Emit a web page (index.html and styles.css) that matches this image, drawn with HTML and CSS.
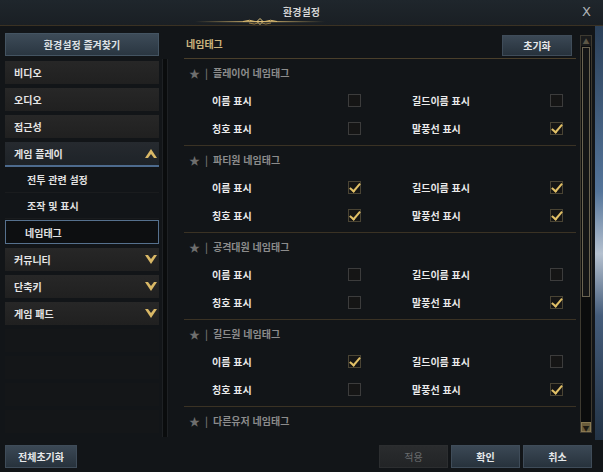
FILE: index.html
```html
<!DOCTYPE html>
<html lang="ko">
<head>
<meta charset="utf-8">
<title>환경설정</title>
<link rel="stylesheet" href="styles.css">
</head>
<body>
<div class="window">
  <header class="titlebar">
    <div class="title">환경설정</div>
    <div class="ornament">
      <svg width="130" height="8" viewBox="0 0 130 8">
        <defs>
          <linearGradient id="gl" x1="0" x2="1" y1="0" y2="0">
            <stop offset="0" stop-color="#c9a75a" stop-opacity="0"/>
            <stop offset="0.5" stop-color="#e2c27a"/>
            <stop offset="1" stop-color="#c9a75a" stop-opacity="0"/>
          </linearGradient>
        </defs>
        <rect x="0" y="3" width="130" height="1.2" fill="url(#gl)"/>
        <path d="M48 3.5 Q55 1 60 3.5 M82 3.5 Q75 1 70 3.5" stroke="#d9b86c" stroke-width="1" fill="none"/>
        <path d="M65 0.5 L68 3.5 L65 6.5 L62 3.5 Z" fill="none" stroke="#e6c980" stroke-width="1"/>
        <path d="M54 5 Q60 7 63 5 M76 5 Q70 7 67 5" stroke="#b99650" stroke-width="0.8" fill="none"/>
      </svg>
    </div>
    <div class="close">X</div>
  </header>

  <div class="content">
    <aside class="sidebar">
      <div class="menu">
        <div class="fav-btn">환경설정 즐겨찾기</div>
        <div class="item">비디오</div>
        <div class="item">오디오</div>
        <div class="item">접근성</div>
        <div class="item open">게임 플레이<span class="chev up"></span></div>
        <div class="sub">전투 관련 설정</div>
        <div class="sub">조작 및 표시</div>
        <div class="sub active">네임태그</div>
        <div class="item">커뮤니티<span class="chev"></span></div>
        <div class="item">단축키<span class="chev"></span></div>
        <div class="item">게임 패드<span class="chev"></span></div>
        <div class="item empty"></div>
        <div class="item empty"></div>
        <div class="item empty"></div>
        <div class="item empty"></div>
      </div>
      <div class="side-scroll"></div>
    </aside>

    <main class="panel">
      <div class="panel-head">
        <div class="panel-title">네임태그</div>
        <div class="btn reset">초기화</div>
      </div>
      <div class="sections">
        <section class="group">
          <div class="group-title"><span class="star">★</span><span class="bar">|</span>플레이어 네임태그</div>
          <div class="row"><span class="lbl">이름 표시</span><span class="cb"></span><span class="lbl">길드이름 표시</span><span class="cb"></span></div>
          <div class="row"><span class="lbl">칭호 표시</span><span class="cb"></span><span class="lbl">말풍선 표시</span><span class="cb on"></span></div>
        </section>
        <section class="group">
          <div class="group-title"><span class="star">★</span><span class="bar">|</span>파티원 네임태그</div>
          <div class="row"><span class="lbl">이름 표시</span><span class="cb on"></span><span class="lbl">길드이름 표시</span><span class="cb on"></span></div>
          <div class="row"><span class="lbl">칭호 표시</span><span class="cb on"></span><span class="lbl">말풍선 표시</span><span class="cb on"></span></div>
        </section>
        <section class="group">
          <div class="group-title"><span class="star">★</span><span class="bar">|</span>공격대원 네임태그</div>
          <div class="row"><span class="lbl">이름 표시</span><span class="cb"></span><span class="lbl">길드이름 표시</span><span class="cb"></span></div>
          <div class="row"><span class="lbl">칭호 표시</span><span class="cb"></span><span class="lbl">말풍선 표시</span><span class="cb on"></span></div>
        </section>
        <section class="group">
          <div class="group-title"><span class="star">★</span><span class="bar">|</span>길드원 네임태그</div>
          <div class="row"><span class="lbl">이름 표시</span><span class="cb on"></span><span class="lbl">길드이름 표시</span><span class="cb"></span></div>
          <div class="row"><span class="lbl">칭호 표시</span><span class="cb"></span><span class="lbl">말풍선 표시</span><span class="cb on"></span></div>
        </section>
        <section class="group">
          <div class="group-title"><span class="star">★</span><span class="bar">|</span>다른유저 네임태그</div>
        </section>
      </div>
    </main>

    <div class="scrollbar">
      <div class="sb-arrow">▲</div>
      <div class="sb-track"><div class="sb-thumb"></div></div>
      <div class="sb-arrow down">▼</div>
    </div>
    <div class="backdrop"></div>
  </div>

  <footer class="footer">
    <div class="btn wide">전체초기화</div>
    <div class="actions">
      <div class="btn disabled">적용</div>
      <div class="btn">확인</div>
      <div class="btn">취소</div>
    </div>
  </footer>
</div>
</body>
</html>
```

FILE: styles.css
```css
* { box-sizing: border-box; }
html, body { margin: 0; padding: 0; }
body {
  width: 603px;
  height: 472px;
  overflow: hidden;
  background: #121518;
  font-family: "Noto Sans CJK KR", "Noto Sans", sans-serif;
  font-size: 10px;
  color: #e4e4e4;
}
.window { display: flex; flex-direction: column; height: 472px; }

.titlebar {
  position: relative;
  height: 26px;
  flex: none;
  background: linear-gradient(#1f262c, #1a1f24);
  border-bottom: 1px solid #3a3122;
  display: flex;
  align-items: center;
  justify-content: center;
}
.title { font-size: 10px; font-weight: bold; color: #d6d6d6; margin-top: -2px; }
.ornament { position: absolute; left: 195px; top: 18px; line-height: 0; }
.close { position: absolute; right: 12px; top: 4px; font-size: 13px; color: #aeb2b6; font-family: "DejaVu Sans", sans-serif; }

.content { display: flex; height: 414px; flex: none; position: relative; }

.sidebar { width: 172px; flex: none; display: flex; padding-left: 5px; }
.menu { width: 154px; display: flex; flex-direction: column; padding-top: 7px; }
.side-scroll { width: 6px; margin-left: 3px; margin-top: 33px; height: 378px; background: #0a0c0d; border-left: 1px solid #1e2124; border-right: 1px solid #1e2124; }

.fav-btn {
  height: 23px;
  background: linear-gradient(#3d4b58, #2a3641);
  border: 1px solid #445462;
  display: flex; align-items: center; justify-content: center;
  color: #dfe3e6; font-weight: bold; font-size: 10px;
  margin-bottom: 5px;
}
.item {
  position: relative;
  height: 23px;
  margin-bottom: 4px;
  background: linear-gradient(#272727, #202020);
  padding-left: 9px;
  display: flex; align-items: center;
  color: #e6e6e6; font-weight: bold; font-size: 10px;
}
.item.open { margin-bottom: 0; border-bottom: 2px solid #4d6b8e; height: 25px; background: linear-gradient(#262a2f, #1e2328); }
.item.empty { background: #141618; }
.sub {
  height: 26px; padding-left: 22px;
  display: flex; align-items: center;
  color: #e2e2e2; font-weight: bold; font-size: 10px;
  border-bottom: 1px solid #1a1c1e;
}
.sub.active {
  height: 24px; padding-left: 19px; margin-top: 1px; margin-bottom: 4px;
  border: 1px solid #56718e; background: #0d0f11;
}
.chev { position: absolute; right: 8px; top: 7px; width: 0; height: 0; }
.chev::before {
  content: ""; position: absolute; left: -6px; top: 0;
  border-left: 6px solid transparent; border-right: 6px solid transparent;
  border-top: 9px solid #d9b866;
}
.chev::after {
  content: ""; position: absolute; left: -3px; top: 0;
  border-left: 3px solid transparent; border-right: 3px solid transparent;
  border-top: 4.5px solid #262626;
}
.chev.up::before { border-top: none; border-bottom: 9px solid #d9b866; }
.chev.up::after { top: 4.5px; border-top: none; border-bottom: 4.5px solid #23272c; }

.panel { width: 392px; flex: none; margin-left: 12px; display: flex; flex-direction: column; overflow: hidden; height: 406px; }
.panel-head {
  height: 33px; flex: none; display: flex; justify-content: space-between; align-items: flex-start;
  border-bottom: 1px solid #4a3f2b; padding-left: 2px; padding-right: 4px;
}
.panel-title { color: #cdb57d; font-weight: bold; font-size: 10px; margin-top: 10px; }
.btn {
  height: 23px; background: linear-gradient(#3b4855, #27323c);
  border: 1px solid #3f4c59;
  display: flex; align-items: center; justify-content: center;
  color: #e6e8ea; font-weight: bold; font-size: 10px;
}
.btn.reset { width: 70px; height: 21px; margin-top: 9px; }

.group { border-bottom: 1px solid #3a3224; padding-bottom: 3px; }
.group-title { height: 27px; display: flex; align-items: center; padding-left: 5px; color: #8c8c8c; font-weight: bold; font-size: 10px; }
.star { color: #6e6e6e; font-size: 11px; margin-right: 5px; }
.bar { color: #6e6e6e; margin-right: 5px; }
.row { height: 28px; display: grid; grid-template-columns: 136px 64px 138px 13px; align-items: center; padding-left: 28px; }
.lbl { color: #eaeaea; font-weight: bold; font-size: 10px; }
.cb { width: 13px; height: 13px; border: 1px solid #3c3c3c; background: #151515; position: relative; }
.cb.on { border-color: #4a4434; }
.cb.on::after {
  content: ""; position: absolute; left: 3px; top: -1px;
  width: 4px; height: 9px;
  border-right: 2px solid #e1c067; border-bottom: 2px solid #e1c067;
  transform: rotate(40deg);
}

.scrollbar { width: 12px; flex: none; margin-left: 4px; margin-top: 9px; height: 398px; display: flex; flex-direction: column; border: 1px solid #3e3a30; background: #0b0c0d; }
.sb-arrow { height: 10px; flex: none; font-size: 7px; line-height: 10px; text-align: center; color: #5c5646; background: #1a1b1c; }
.sb-arrow.down { background: #6a5c3b; color: #1e1a12; border: 1px solid #8a7a52; }
.sb-track { flex: 1; padding: 1px; }
.sb-thumb { height: 250px; border: 1px solid #6a6351; background: #141517; }
.backdrop { flex: 1; margin-left: 3px; background: linear-gradient(#2e4560, #5b7fa8 40%, #c7d4e4 55%, #4a6485 70%, #24364a); opacity: 0.9; }

.footer { flex: none; height: 32px; display: flex; justify-content: space-between; align-items: flex-start; padding: 5px 11px 0 5px; }
.btn.wide { width: 72px; }
.actions { display: flex; gap: 3px; }
.actions .btn { width: 69px; }
.btn.disabled { background: linear-gradient(#2a2c2e, #222426); border-color: #2c2e30; color: #6a6c6e; font-weight: normal; }
```
